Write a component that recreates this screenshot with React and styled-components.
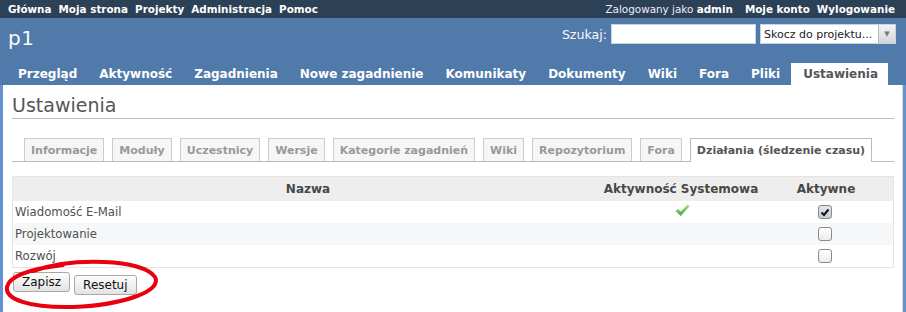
import React from 'react'
import styled, { createGlobalStyle } from 'styled-components'

const Global = createGlobalStyle`
  html, body { margin: 0; padding: 0; background: #fff; }
  body {
    font-family: "DejaVu Sans", Verdana, sans-serif;
    font-size: 12px;
    color: #484848;
  }
`

const Page = styled.div`
  width: 906px;
  height: 312px;
  overflow: hidden;
  display: flex;
  flex-direction: column;
`

const TopMenu = styled.div`
  background: #2c4056;
  height: 18px;
  display: flex;
  align-items: center;
  justify-content: space-between;
  padding: 0 11px 0 8px;
  font-size: 10.4px;
  color: #fff;
`

const TopLinks = styled.div`
  display: flex;
  gap: 7px;
  align-items: center;
`

const TopLink = styled.span`
  font-weight: ${p => (p.$plain ? 'normal' : 'bold')};
  color: ${p => (p.$plain ? '#eef' : '#fff')};
  margin-right: ${p => (p.$plain ? '5px' : '0')};
  white-space: nowrap;
  b { font-weight: bold; color: #fff; }
`

const Header = styled.div`
  background: #507aaa;
  height: 67px;
  display: flex;
  flex-direction: column;
  color: #f8f8f8;
`

const HeaderRow = styled.div`
  display: flex;
  justify-content: space-between;
  align-items: flex-start;
  height: 45px;
  padding: 0 10px 0 8px;
`

const Title = styled.h1`
  margin: 0;
  padding-top: 8px;
  font-size: 20px;
  font-weight: normal;
  letter-spacing: 0.5px;
`

const Search = styled.div`
  display: flex;
  align-items: center;
  gap: 4px;
  margin-top: 6px;
  font-size: 12.6px;
  white-space: nowrap;
`

const SearchInput = styled.div`
  width: 143px;
  height: 18px;
  background: #fff;
  border: 1px solid #c8d3e0;
`

const JumpBox = styled.div`
  width: 134px;
  height: 18px;
  background: #fff;
  border: 1px solid #c8d3e0;
  display: flex;
  align-items: center;
  color: #222;
  font-size: 11px;
  span { flex: 1; padding-left: 3px; white-space: nowrap; }
`

const Arrow = styled.div`
  width: 16px;
  height: 18px;
  flex: none;
  background: linear-gradient(#f4f4f4, #d4d4d4);
  border-left: 1px solid #bbb;
  display: flex;
  align-items: center;
  justify-content: center;
  color: #777;
  font-size: 7px;
`

const MainMenu = styled.div`
  display: flex;
  align-items: flex-end;
  padding-left: 7px;
  height: 22px;
`

const MenuItem = styled.div`
  height: 22px;
  display: flex;
  align-items: center;
  white-space: nowrap;
  font-size: 12px;
  font-weight: bold;
  background: ${p => (p.$selected ? '#fff' : 'transparent')};
  color: ${p => (p.$selected ? '#555' : '#fff')};
  padding: ${p => (p.$selected ? '0 10px 0 12px' : '0 11px')};
`

const Body = styled.div`
  flex: 1;
  display: flex;
  border-left: 3px solid #6593cf;
  border-right: 3px solid #6593cf;
`

const Content = styled.div`
  flex: 1;
  background: #fff;
  padding: 6px 8px 0 9px;
  border-right: 1px solid #ddd;
`

const H2 = styled.h2`
  margin: 0 0 10px 0;
  padding: 2px 10px 1px 0;
  font-size: 19px;
  line-height: 24px;
  font-weight: normal;
  color: #555;
  border-bottom: 1px solid #bbb;
`

const Tabs = styled.div`
  display: flex;
  gap: 8px;
  margin-top: 19px;
  padding-left: 12px;
  border-bottom: 1px solid #bbb;
  height: 23px;
`

const Tab = styled.div`
  box-sizing: border-box;
  padding: 0 6px;
  display: flex;
  align-items: center;
  border: 1px solid #ccc;
  border-bottom: none;
  background: ${p => (p.$selected ? '#fff' : '#f6f6f6')};
  color: ${p => (p.$selected ? '#555' : '#999')};
  font-size: 11px;
  font-weight: bold;
  white-space: nowrap;
  height: ${p => (p.$selected ? '24px' : '23px')};
  margin-bottom: ${p => (p.$selected ? '-1px' : '0')};
  ${p => p.$selected && 'border-color: #bbb;'}
`

const Table = styled.table`
  margin-top: 14px;
  width: 100%;
  border-collapse: collapse;
  border: 1px solid #e4e4e4;
`

const Th = styled.th`
  background: #eee;
  height: 24px;
  padding: 0;
  font-size: 12px;
  font-weight: bold;
  color: #484848;
  text-align: center;
  width: ${p => p.$w || 'auto'};
`

const Tr = styled.tr`
  background: ${p => (p.$even ? '#f6f7f8' : '#fff')};
`

const Td = styled.td`
  height: 22px;
  padding: 0 0 0 2px;
  font-size: 11.7px;
  color: #505050;
  text-align: ${p => (p.$center ? 'center' : 'left')};
  vertical-align: middle;
`

const Box = styled.span`
  display: inline-flex;
  align-items: center;
  justify-content: center;
  width: 12px;
  height: 12px;
  border: 1px solid #8a8a8a;
  border-radius: 3px;
  background: ${p => (p.$checked ? 'linear-gradient(#e4e6ee, #c8ccd8)' : 'linear-gradient(#fff, #ececec)')};
  vertical-align: middle;
  margin-right: 4px;
`

const Actions = styled.div`
  position: relative;
  display: flex;
  align-items: flex-start;
  gap: 4px;
  padding: 4px 0 0 1px;
`

const Button = styled.div`
  box-sizing: border-box;
  height: 20px;
  padding: 0 8px;
  margin-top: ${p => p.$drop || 0}px;
  display: flex;
  align-items: center;
  border: 1px solid #a8a8a8;
  border-radius: 3px;
  background: linear-gradient(#fdfdfd, #e2e2e2);
  color: #111;
  font-size: 12px;
`

const Scribble = styled.svg`
  position: absolute;
  left: -9px;
  top: -13px;
  pointer-events: none;
`

const Check = () => (
  <svg width="15" height="13" viewBox="0 0 15 13">
    <defs>
      <linearGradient id="gc" x1="0" y1="0" x2="0" y2="1">
        <stop offset="0" stopColor="#a4e486" />
        <stop offset="1" stopColor="#4aa536" />
      </linearGradient>
    </defs>
    <path d="M0.5 7 L3 5 L5.8 7.6 L12.6 0.5 L14.5 2.2 L5.8 12 Z" fill="url(#gc)" />
  </svg>
)

const Tick = () => (
  <svg width="10" height="9" viewBox="0 0 10 9">
    <path d="M1.5 4.5 L4 7 L8.5 1.5" fill="none" stroke="#111" strokeWidth="2" />
  </svg>
)

const menu = ['Przegląd', 'Aktywność', 'Zagadnienia', 'Nowe zagadnienie', 'Komunikaty', 'Dokumenty', 'Wiki', 'Fora', 'Pliki']
const tabs = ['Informacje', 'Moduły', 'Uczestnicy', 'Wersje', 'Kategorie zagadnień', 'Wiki', 'Repozytorium', 'Fora']
const rows = [
  { name: 'Wiadomość E-Mail', system: true, active: true },
  { name: 'Projektowanie', system: false, active: false },
  { name: 'Rozwój', system: false, active: false },
]

const App = () => {
  return (
    <Page>
      <Global />
      <TopMenu>
        <TopLinks>
          <TopLink>Główna</TopLink>
          <TopLink>Moja strona</TopLink>
          <TopLink>Projekty</TopLink>
          <TopLink>Administracja</TopLink>
          <TopLink>Pomoc</TopLink>
        </TopLinks>
        <TopLinks>
          <TopLink $plain>Zalogowany jako <b>admin</b></TopLink>
          <TopLink>Moje konto</TopLink>
          <TopLink>Wylogowanie</TopLink>
        </TopLinks>
      </TopMenu>
      <Header>
        <HeaderRow>
          <Title>p1</Title>
          <Search>
            Szukaj:
            <SearchInput />
            <JumpBox>
              <span>Skocz do projektu...</span>
              <Arrow>▼</Arrow>
            </JumpBox>
          </Search>
        </HeaderRow>
        <MainMenu>
          {menu.map(m => <MenuItem key={m}>{m}</MenuItem>)}
          <MenuItem $selected>Ustawienia</MenuItem>
        </MainMenu>
      </Header>
      <Body>
        <Content>
          <H2>Ustawienia</H2>
          <Tabs>
            {tabs.map(t => <Tab key={t}>{t}</Tab>)}
            <Tab $selected>Działania (śledzenie czasu)</Tab>
          </Tabs>
          <Table>
            <thead>
              <tr>
                <Th $w="590px">Nazwa</Th>
                <Th $w="156px">Aktywność Systemowa</Th>
                <Th>Aktywne</Th>
              </tr>
            </thead>
            <tbody>
              {rows.map((r, i) => (
                <Tr key={r.name} $even={i % 2 === 1}>
                  <Td>{r.name}</Td>
                  <Td $center>{r.system && <Check />}</Td>
                  <Td $center>
                    <Box $checked={r.active}>{r.active && <Tick />}</Box>
                  </Td>
                </Tr>
              ))}
            </tbody>
          </Table>
          <Actions>
            <Button>Zapisz</Button>
            <Button $drop={3}>Resetuj</Button>
            <Scribble width="160" height="56" viewBox="0 0 160 56">
              <path
                d="M30 16 C70 2 140 4 152 22 C160 36 120 50 70 52 C25 53 2 44 4 32 C6 22 25 14 60 10"
                fill="none"
                stroke="#e8000e"
                strokeWidth="4"
                strokeLinecap="round"
              />
            </Scribble>
          </Actions>
        </Content>
      </Body>
    </Page>
  )
}

export default App
